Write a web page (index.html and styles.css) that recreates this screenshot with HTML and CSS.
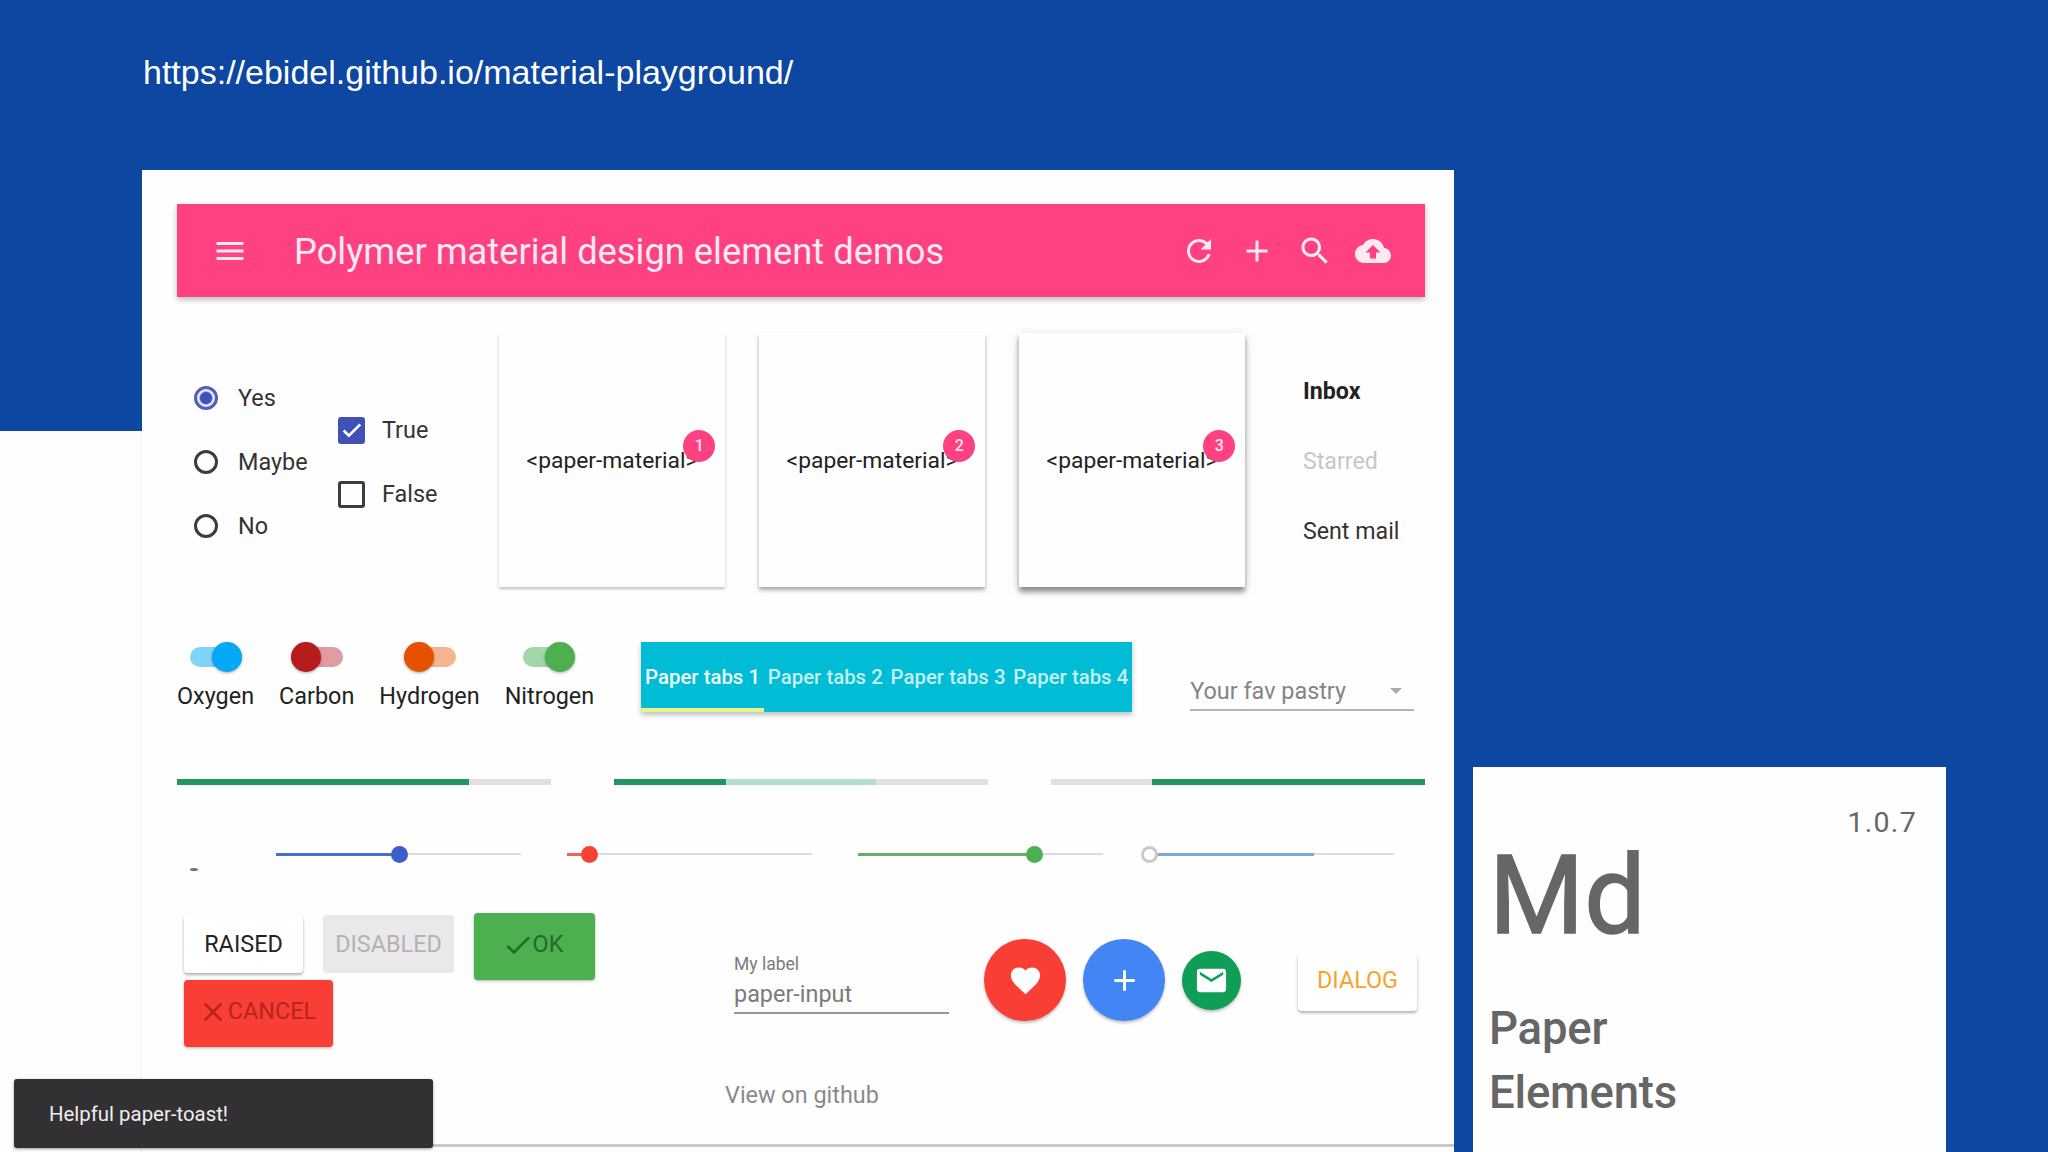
FILE: index.html
```html
<!DOCTYPE html>
<html lang="en">
<head>
  <meta charset="utf-8">
  <title>Polymer material design element demos</title>
  <link rel="stylesheet" href="styles.css">
</head>
<body>
<div class="slide">
  <div class="url">https://ebidel.github.io/material-playground/</div>
  <div class="margin"></div>

  <main class="demo">
    <header class="toolbar">
      <svg class="icon menu-icon" viewBox="0 0 24 24"><path d="M3 18h18v-2H3v2zm0-5h18v-2H3v2zm0-7v2h18V6H3z"/></svg>
      <h1>Polymer material design element demos</h1>
      <svg class="icon" viewBox="0 0 24 24"><path d="M17.65 6.35C16.2 4.9 14.21 4 12 4c-4.42 0-7.99 3.58-7.99 8s3.57 8 7.99 8c3.73 0 6.84-2.55 7.73-6h-2.08c-.82 2.33-3.04 4-5.65 4-3.31 0-6-2.69-6-6s2.69-6 6-6c1.66 0 3.14.69 4.22 1.78L13 11h7V4l-2.35 2.35z"/></svg>
      <svg class="icon" viewBox="0 0 24 24"><path d="M19 13h-6v6h-2v-6H5v-2h6V5h2v6h6v2z"/></svg>
      <svg class="icon" viewBox="0 0 24 24"><path d="M15.5 14h-.79l-.28-.27C15.41 12.59 16 11.11 16 9.5 16 5.91 13.09 3 9.5 3S3 5.91 3 9.5 5.91 16 9.5 16c1.61 0 3.09-.59 4.23-1.57l.27.28v.79l5 4.99L20.49 19l-4.99-5zm-6 0C7.01 14 5 11.99 5 9.5S7.01 5 9.5 5 14 7.01 14 9.5 11.99 14 9.5 14z"/></svg>
      <svg class="icon" viewBox="0 0 24 24"><path d="M19.35 10.04C18.67 6.59 15.64 4 12 4 9.11 4 6.6 5.64 5.35 8.04 2.34 8.36 0 10.91 0 14c0 3.31 2.69 6 6 6h13c2.76 0 5-2.24 5-5 0-2.64-2.05-4.78-4.65-4.96zM14 13v4h-4v-4H7l5-5 5 5h-3z"/></svg>
    </header>

    <section class="row row-material">
      <div class="radios">
        <div class="option"><span class="radio checked"></span>Yes</div>
        <div class="option"><span class="radio"></span>Maybe</div>
        <div class="option"><span class="radio"></span>No</div>
      </div>
      <div class="checks">
        <div class="option"><span class="check checked"><svg viewBox="0 0 24 24"><path d="M3 12l6 6L22 5"/></svg></span>True</div>
        <div class="option"><span class="check"></span>False</div>
      </div>
      <div class="material z1"><span class="material-text">&lt;paper-material&gt;<b class="badge">1</b></span></div>
      <div class="material z2"><span class="material-text">&lt;paper-material&gt;<b class="badge">2</b></span></div>
      <div class="material z3"><span class="material-text">&lt;paper-material&gt;<b class="badge">3</b></span></div>
      <nav class="menu">
        <div class="selected">Inbox</div>
        <div class="disabled">Starred</div>
        <div>Sent mail</div>
      </nav>
    </section>

    <section class="row row-toggles">
      <div class="toggle on oxygen"><span class="track"><i></i></span>Oxygen</div>
      <div class="toggle carbon"><span class="track"><i></i></span>Carbon</div>
      <div class="toggle hydrogen"><span class="track"><i></i></span>Hydrogen</div>
      <div class="toggle on nitrogen"><span class="track"><i></i></span>Nitrogen</div>
      <div class="tabs">
        <div class="tab active">Paper tabs 1</div>
        <div class="tab">Paper tabs 2</div>
        <div class="tab">Paper tabs 3</div>
        <div class="tab">Paper tabs 4</div>
      </div>
      <div class="dropdown">Your fav pastry<span class="caret"></span></div>
    </section>

    <section class="row row-progress">
      <div class="progress"><i class="primary" style="width: 78%"></i></div>
      <div class="progress"><i class="primary" style="width: 30%"></i><i class="secondary" style="width: 40%"></i></div>
      <div class="progress end"><i class="primary" style="width: 73%"></i></div>
    </section>

    <section class="row row-sliders">
      <div class="spinner"></div>
      <div class="slider blue"><i style="width: 50%"></i><b></b></div>
      <div class="slider red"><i style="width: 9%"></i><b></b></div>
      <div class="slider green"><i style="width: 72%"></i><b></b></div>
      <div class="slider empty"><b></b><i style="width: 67%"></i></div>
    </section>

    <section class="row row-buttons">
      <div class="buttons">
        <div class="button raised">RAISED</div>
        <div class="button off">DISABLED</div>
        <div class="button ok"><svg viewBox="0 0 24 24"><path d="M9 16.17L4.83 12l-1.42 1.41L9 19 21 7l-1.41-1.41z"/></svg>OK</div>
        <div class="button cancel"><svg viewBox="0 0 24 24"><path d="M19 6.41L17.59 5 12 10.59 6.41 5 5 6.41 10.59 12 5 17.59 6.41 19 12 13.41 17.59 19 19 17.59 13.41 12z"/></svg>CANCEL</div>
      </div>
      <div class="input"><small>My label</small><span>paper-input</span></div>
      <div class="fab heart"><svg viewBox="0 0 24 24"><path d="M12 21.35l-1.45-1.32C5.4 15.36 2 12.28 2 8.5 2 5.42 4.42 3 7.5 3c1.74 0 3.41.81 4.5 2.09C13.09 3.81 14.76 3 16.5 3 19.58 3 22 5.42 22 8.5c0 3.78-3.4 6.86-8.55 11.54L12 21.35z"/></svg></div>
      <div class="fab add"><svg viewBox="0 0 24 24"><path d="M19 13h-6v6h-2v-6H5v-2h6V5h2v6h6v2z"/></svg></div>
      <div class="fab mini"><svg viewBox="0 0 24 24"><path d="M20 4H4c-1.1 0-1.99.9-1.99 2L2 18c0 1.1.9 2 2 2h16c1.1 0 2-.9 2-2V6c0-1.1-.9-2-2-2zm0 4l-8 5-8-5V6l8 5 8-5v2z"/></svg></div>
      <div class="button dialog">DIALOG</div>
    </section>

    <footer class="github">View on github</footer>
  </main>

  <aside class="element">
    <div class="version">1.0.7</div>
    <div class="symbol">Md</div>
    <div class="name">Paper<br>Elements</div>
  </aside>

  <div class="toast">Helpful paper-toast!</div>
</div>
</body>
</html>
```
FILE: styles.css
```css
* { box-sizing: border-box; }
body { margin: 0; background: #0d47a1; font-family: Roboto, sans-serif; color: #333; }

.slide {
  position: relative;
  display: grid;
  grid-template-columns: 142px 1312px 492px;
  grid-template-rows: 170px 982px;
  width: 2048px;
  height: 1152px;
  overflow: hidden;
  white-space: nowrap;
}
.url {
  grid-column: 2 / 4;
  padding: 52px 0 0 1px;
  font: 34px/40px "Liberation Sans", Arial, sans-serif;
  color: #fff;
}
.margin { grid-column: 1; grid-row: 2; margin-top: 261px; background: #fdfdfe; border-right: 1px solid #f4f2f6; }

.demo {
  grid-column: 2;
  grid-row: 2;
  height: 977px;
  padding: 34px 29px 0 35px;
  background: #fefefe;
  border-bottom: 3px solid #c9c8cb;
  font-size: 23.4px;
  box-shadow: 0 0 0 6px #fdfdfe;
  clip-path: inset(0 0 -6px 0);
}
.row { display: flex; }

.toolbar {
  display: flex;
  align-items: center;
  height: 93px;
  padding: 0 34px 0 35px;
  background: #ff4081;
  color: #fceaf2;
  box-shadow: 0 3px 6px rgba(0, 0, 0, .25);
}
.toolbar h1 { flex: 1; margin: 2px 0 0 46px; font-size: 36.3px; font-weight: 400; }
.icon { width: 36px; height: 36px; fill: #fceaf2; }
.icon + .icon { margin-left: 22px; }

/* radios, checkboxes, paper-material cards, menu */
.row-material { height: 345px; padding-top: 36px; }
.radios { width: 144px; padding: 33px 0 0 17px; }
.checks { width: 178px; padding-top: 65px; padding-left: 17px; }
.option { display: flex; align-items: center; height: 64px; }
.radio { width: 24px; height: 24px; margin-right: 20px; border: 3px solid #3c3c3e; border-radius: 50%; }
.radio.checked { border-color: #5360b8; background: radial-gradient(circle, #3f51b5 5.5px, #e4e6fa 7px); }
.check { width: 27px; height: 27px; margin-right: 17px; border: 3px solid #3c3c3e; border-radius: 3px; }
.check.checked { background: #3f51b5; border-color: #3f51b5; }
.check svg { display: block; width: 21px; height: 21px; fill: none; stroke: #fff; stroke-width: 3; }

.material {
  display: flex;
  align-items: center;
  justify-content: center;
  width: 226px;
  height: 254px;
  margin-right: 34px;
  color: #222;
}
.material-text { position: relative; font-size: 22.8px; }
.z1 { box-shadow: 0 2px 3px rgba(0, 0, 0, .24); }
.z2 { box-shadow: 0 3px 4px rgba(0, 0, 0, .34); }
.z3 { box-shadow: 0 5px 5px rgba(0, 0, 0, .4), 0 2px 12px rgba(0, 0, 0, .12); }
.badge {
  position: absolute;
  right: -18px;
  top: -17px;
  width: 32px;
  height: 32px;
  border-radius: 50%;
  background: #ff4081;
  color: #fde3ee;
  font-size: 16px;
  font-weight: 500;
  line-height: 32px;
  text-align: center;
}
.menu { padding: 23px 0 0 24px; line-height: 70px; font-size: 23.2px; }
.menu .selected { font-weight: 700; color: #222; }
.menu .disabled { color: #c6c6c8; }

/* toggles, tabs, dropdown */
.row-toggles { height: 137px; align-items: flex-start; }
.toggle { margin-right: 25px; text-align: center; line-height: 30px; color: #222; }
.track {
  display: flex;
  align-items: center;
  width: 52px;
  height: 20px;
  margin: 5px auto 14px;
  border-radius: 10px;
}
.track i { width: 30px; height: 30px; flex: none; border-radius: 50%; box-shadow: 0 1px 3px rgba(0, 0, 0, .35); }
.on .track { justify-content: flex-end; }
.oxygen .track { background: #7fd3f8; }
.oxygen i { background: #03a9f4; }
.carbon .track { background: #e29aa3; }
.carbon i { background: #b71c1c; }
.hydrogen .track { background: #f5b48e; }
.hydrogen i { background: #e65100; }
.nitrogen .track { background: #a3d6a8; }
.nitrogen i { background: #4caf50; }
.tabs {
  display: flex;
  width: 491px;
  height: 70px;
  margin-left: 22px;
  background: #00bcd4;
  box-shadow: 0 3px 5px rgba(0, 0, 0, .25);
}
.tab { flex: 1; line-height: 71px; font-size: 20.4px; font-weight: 500; text-align: center; color: #c2f1f6; }
.tab.active { color: #f0fdfd; border-bottom: 4px solid #e3f58c; }
.dropdown {
  display: flex;
  align-items: center;
  justify-content: space-between;
  width: 224px;
  height: 38px;
  margin: 31px 0 0 58px;
  padding-right: 12px;
  border-bottom: 2px solid #b5b3b7;
  color: #858487;
}
.caret { border: 6px solid transparent; border-top-color: #aaa; border-bottom: 0; }

.row-progress { height: 53px; gap: 63px; }
.progress { display: flex; width: 374px; height: 6px; background: #e0dfe1; }
.progress.end { justify-content: flex-end; }
.primary { background: #229562; }
.secondary { background: #b0e0cc; }

.row-sliders { height: 81px; padding-left: 13px; }
.spinner { flex: none; width: 8px; height: 3px; margin: 36px 78px 0 0; border-radius: 50%; background: #5e7596; }
.slider {
  display: flex;
  flex: none;
  align-items: center;
  width: 245px;
  height: 20px;
  margin: 12px 46px 0 0;
  background: linear-gradient(#dcdbdd, #dcdbdd) center / 100% 2px no-repeat;
}
.slider i { height: 3px; }
.slider b { flex: none; width: 17px; height: 17px; margin: 0 -8px; border-radius: 50%; }
.blue i { background: #4a6fce; }
.blue b { background: #3a5fcd; }
.red i { background: #f0625c; }
.red b { background: #f44336; }
.green i { background: #67ac69; }
.green b { background: #4caf50; }
.empty i { background: #79a9d6; }
.empty b { z-index: 1; border: 3px solid #c9c7ca; background: #fff; }

.row-buttons { height: 155px; align-items: flex-start; }
.buttons { display: flex; flex-wrap: wrap; align-items: flex-start; width: 430px; margin-right: 127px; padding-left: 7px; }
.button {
  display: flex;
  align-items: center;
  justify-content: center;
  height: 58px;
  border-radius: 4px;
  background: #fff;
  color: #222;
}
.button svg { width: 32px; height: 32px; margin: 2px -1px 0 -4px; fill: currentColor; }
.raised { width: 119px; margin: 2px 20px 0 0; box-shadow: 0 2px 3px rgba(0, 0, 0, .3); }
.off { width: 131px; margin: 2px 20px 0 0; background: #eae8eb; color: #b4b2b5; }
.ok { width: 121px; height: 67px; padding-bottom: 5px; background: #4caf50; color: #25692b; box-shadow: 0 1px 3px rgba(0, 0, 0, .3); }
.cancel { width: 149px; height: 67px; padding-bottom: 5px; background: #f93e36; color: #b3261f; box-shadow: 0 1px 3px rgba(0, 0, 0, .3); }
.input {
  width: 215px;
  height: 65px;
  margin: 36px 35px 0 0;
  padding-top: 3px;
  border-bottom: 2px solid #98969a;
  color: #7b7a7d;
}
.input small { display: block; font-size: 17.5px; line-height: 24px; }
.input span { display: block; line-height: 37px; }
.fab {
  display: flex;
  align-items: center;
  justify-content: center;
  width: 82px;
  height: 82px;
  margin: 26px 17px 0 0;
  border-radius: 50%;
  box-shadow: 0 2px 3px rgba(0, 0, 0, .25);
}
.fab svg { width: 35px; height: 35px; fill: #fff; }
.heart { background: #f93e36; }
.add { background: #4285f4; }
.mini { width: 59px; height: 59px; margin: 38px 57px 0 0; background: #0f9d58; }
.dialog { width: 119px; margin-top: 40px; padding-bottom: 5px; color: #f5a32a; box-shadow: 0 2px 3px rgba(0, 0, 0, .3); }

.github { padding-left: 548px; line-height: 54px; color: #8a898c; }

.element {
  grid-column: 3;
  grid-row: 2;
  margin: 597px 0 0 19px;
  padding: 0 29px 0 16px;
  background: #fefefe;
  color: #666;
}
.version { padding-top: 38px; text-align: right; font-size: 28.5px; line-height: 36px; letter-spacing: 1.3px; }
.symbol { font-size: 109px; line-height: 110px; -webkit-text-stroke: 1.5px #666; }
.name { margin-top: 46px; font-size: 45.5px; font-weight: 500; line-height: 64px; letter-spacing: -.2px; }

.toast {
  position: absolute;
  left: 14px;
  top: 1079px;
  width: 419px;
  height: 69px;
  padding-left: 35px;
  border-radius: 3px;
  background: #323033;
  color: #eee;
  font-size: 20.4px;
  line-height: 71px;
  box-shadow: 0 1px 3px rgba(0, 0, 0, .4);
}
```
